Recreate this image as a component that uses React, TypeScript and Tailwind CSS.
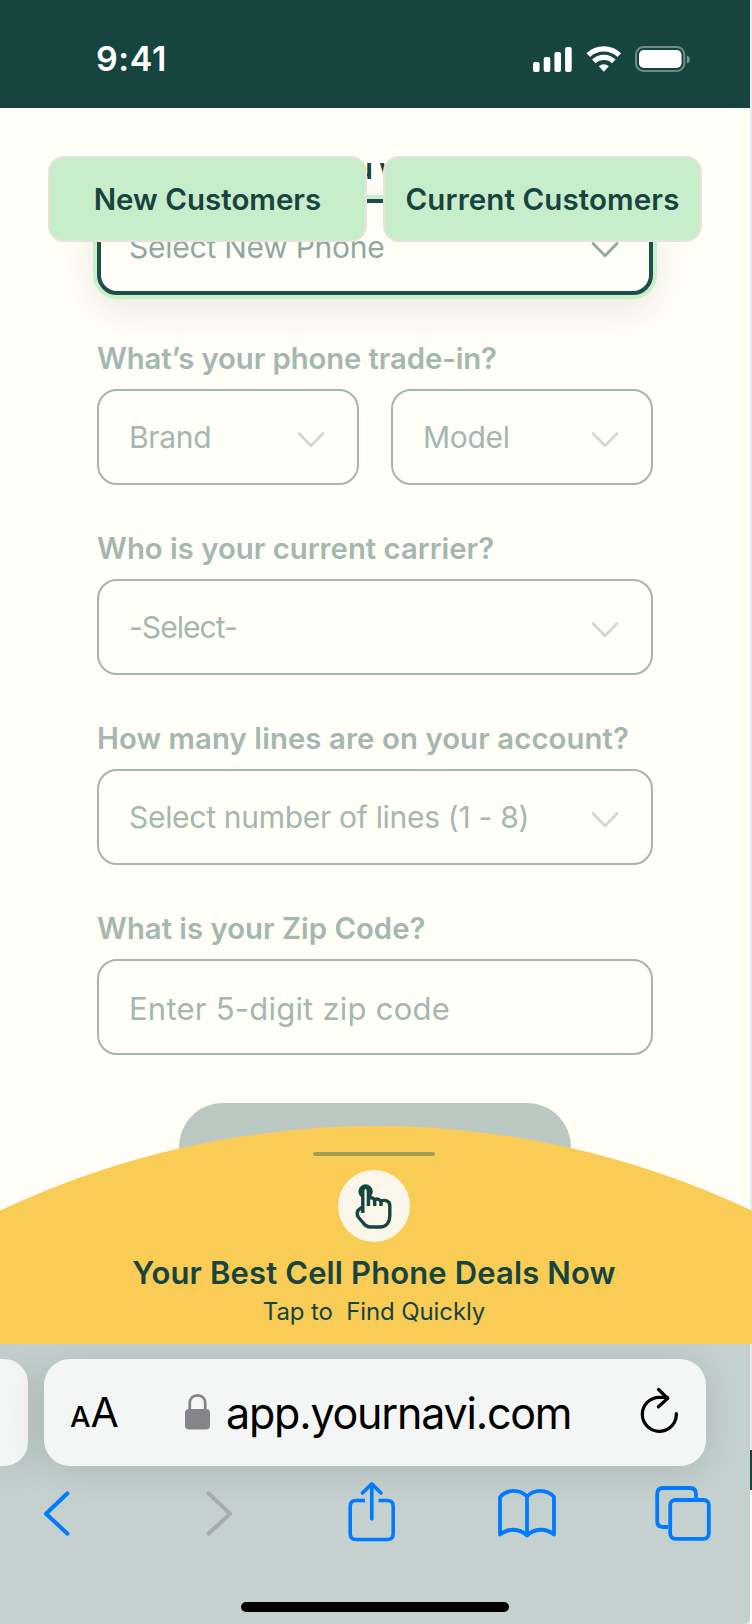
import React from 'react'

const ink = '#16443e';

function Chevron({ className }: { className: string }) {
  return (
    <svg className={className} width="28" height="18" viewBox="0 0 28 18" fill="none" stroke="currentColor" strokeWidth="2.8" strokeLinecap="round" strokeLinejoin="round">
      <path d="M2 2.5L14 14.7L26 2.5" />
    </svg>
  );
}

function Label({ children, className = 'text-[#a4b7b0]' }: { children: React.ReactNode; className?: string }) {
  return <div className={`h-[40px] whitespace-nowrap text-[29.3px] font-semibold leading-[40px] ${className}`}>{children}</div>;
}

function SelectBox({ text, textClass = 'tracking-[-0.3px]' }: { text: string; textClass?: string }) {
  return (
    <div className="flex h-24 flex-1 items-center justify-between rounded-[20px] border-2 border-[#a3b6b0] pl-[30px] pr-8 text-[#a4b7b0]">
      <span className={`whitespace-nowrap text-[30px] leading-[40px] ${textClass}`}>{text}</span>
      <Chevron className="mt-[5px] text-[#d0dad3]" />
    </div>
  );
}

function StatusBar() {
  return (
    <header className="flex h-[108px] w-[750px] items-center justify-between bg-[#16443e] pl-24 pr-[60px] pt-[10px] text-white">
      <span className="text-[34px] font-semibold leading-[40px] tracking-[0.6px]">9:41</span>
      <svg width="157" height="28" viewBox="533 45 157 28" fill="#fff">
        <rect x="533" y="62" width="6.6" height="10" rx="2" />
        <rect x="543.7" y="57" width="6.6" height="15" rx="2" />
        <rect x="554.4" y="52" width="6.6" height="20" rx="2" />
        <rect x="565.1" y="47" width="6.6" height="25" rx="2" />
        <g fill="none" stroke="#fff" strokeWidth="5.2">
          <path d="M588.3 55.2A22.4 22.4 0 0 1 619.3 55.2" />
          <path d="M593.8 61.4A14.6 14.6 0 0 1 613.8 61.4" />
        </g>
        <path d="M598.8 66.2A7.4 7.4 0 0 1 608.8 66.2L603.8 71.8Z" />
        <rect x="636" y="47" width="48.3" height="24" rx="7.5" fill="none" stroke="#fff" strokeOpacity="0.38" strokeWidth="2" />
        <rect x="639" y="50" width="42.5" height="18" rx="4.8" />
        <path d="M686.8 55.5C688.8 56.2 690 57.8 690 59.5C690 61.3 688.8 62.8 686.8 63.6Z" fillOpacity="0.42" />
      </svg>
    </header>
  );
}

function Form() {
  return (
    <div className="flex flex-col gap-[46px] px-[97px] pt-[41px]">
      <div className="flex flex-col gap-[10px]">
        <Label className="text-[#16443e] tracking-[0.35px] [word-spacing:-1.6px]">What phone do you want?</Label>
        <div className="flex h-24 items-center justify-between rounded-[20px] border-4 border-[#1b4f49] bg-[#fffff8] pl-7 pr-[30px] text-[#8fa8a2] shadow-[0_0_0_4px_#c8eeca,0_12px_40px_rgba(40,40,30,0.12)]">
          <span className="whitespace-nowrap text-[30px] leading-[40px] tracking-[-0.25px]">Select New Phone</span>
          <Chevron className="mt-[5px] text-[#8fa8a2]" />
        </div>
      </div>
      <div className="-mt-[2px] flex flex-col gap-[10px]">
        <Label className="tracking-[-0.1px] text-[#a4b7b0]">What’s your phone trade-in?</Label>
        <div className="flex gap-8">
          <SelectBox text="Brand" />
          <SelectBox text="Model" />
        </div>
      </div>
      <div className="-mt-[2px] flex flex-col gap-[10px]">
        <Label>Who is your current carrier?</Label>
        <div className="flex"><SelectBox text="-Select-" textClass="tracking-[-0.95px]" /></div>
      </div>
      <div className="-mt-[2px] flex flex-col gap-[10px]">
        <Label className="tracking-[0.1px] text-[#a4b7b0]">How many lines are on your account?</Label>
        <div className="flex"><SelectBox text="Select number of lines (1 - 8)" /></div>
      </div>
      <div className="-mt-[2px] flex flex-col gap-[10px]">
        <Label>What is your Zip Code?</Label>
        <div className="flex h-24 items-center rounded-[20px] border-2 border-[#a3b6b0] pl-[30px] pt-[3px] text-[31px] leading-[40px] tracking-[0.23px] text-[#a4b7b0]">
          Enter 5-digit zip code
        </div>
      </div>
      <div className="mt-[2px] h-[88px] w-[392px] self-center rounded-full bg-[#bbc8c2]" />
    </div>
  );
}

function DealsBanner() {
  return (
    <div className="absolute bottom-0 left-0 h-[218px] w-[752px]">
      <svg className="absolute inset-0" width="752" height="218" viewBox="0 0 752 218">
        <path d="M0 84.6A878 878 0 0 1 752 84.6V218H0Z" fill="#f9cc55" />
      </svg>
      <div className="relative flex w-[748px] flex-col items-center pt-[26px] text-[#16443e]">
        <div className="h-1 w-[122px] rounded-full bg-[#a39c57]" />
        <div className="mt-[14px] flex size-[72px] items-center justify-center rounded-full bg-[#faf7ea]">
          <svg width="40" height="48" viewBox="354.6 1182 40 48" fill="none" stroke={ink} strokeWidth="3.4" strokeLinejoin="round">
            <path d="M362.2 1194.4A4.9 4.9 0 1 1 370.2 1194.4" strokeWidth="4.6" strokeLinecap="round" />
            <path d="M363.4 1213V1190.5Q363.4 1187.3 366.2 1187.3Q369 1187.3 369 1190.5V1206M369 1198.5C371.5 1197 374.5 1197.8 375.3 1200.5V1206M375.3 1199.6C378 1198.4 380.8 1199.2 381.6 1202V1206M381.6 1201C386 1199.5 390.4 1201 390.4 1205.5V1215C390.4 1222.5 386.5 1227 380.5 1227H371.5C368 1227 365.5 1225.5 363.5 1222.5L359.2 1217.5C356.8 1214.3 357.5 1210.8 360 1209.2L363.4 1206.8" />
          </svg>
        </div>
        <div className="mt-[11px] whitespace-nowrap text-[31px] font-semibold leading-[40px] tracking-[0.13px]">Your Best Cell Phone Deals Now</div>
        <div className="mt-[3px] whitespace-pre text-[24px] leading-[32px] tracking-[-0.1px]">Tap to  Find Quickly</div>
      </div>
    </div>
  );
}

function BrowserBar() {
  return (
    <footer className="flex h-[280px] w-[750px] flex-col overflow-hidden rounded-br-md bg-[#c5d1cf]">
      <div className="flex gap-4 pt-[15px]">
        <div className="h-[107px] w-7 rounded-r-[24px] bg-[#f4f6f5] shadow-[0_4px_36px_rgba(50,70,60,0.18)]" />
        <div className="flex h-[107px] w-[662px] items-center rounded-[26px] bg-[#f4f6f5] pl-[26px] pr-7 text-black shadow-[0_4px_36px_rgba(50,70,60,0.18)]">
          <div className="flex w-[115px] items-baseline pt-1 leading-[44px]">
            <span className="text-[29px] font-medium">A</span>
            <span className="text-[41px]">A</span>
          </div>
          <svg width="25" height="36" viewBox="0 0 25 36" className="-mt-[2px] shrink-0">
            <path d="M4.8 16V9.5C4.8 4.5 8 1.4 12.5 1.4S20.2 4.5 20.2 9.5V16" fill="none" stroke="#858589" strokeWidth="2.8" />
            <rect y="15" width="25" height="20.6" rx="4" fill="#858589" />
          </svg>
          <span className="ml-4 whitespace-nowrap text-[43px] leading-[52px] tracking-[-1.2px]">app.yournavi.com</span>
          <svg className="-mt-[5px] ml-auto" width="38" height="46" viewBox="640 1387 38 46" fill="none" stroke="#000" strokeWidth="3.2" strokeLinecap="round" strokeLinejoin="round">
            <path d="M676.3 1413.5A17 17 0 1 1 659.3 1397.3H667.5M658.5 1389.5L667.8 1398.3L658.5 1406.8" />
          </svg>
        </div>
      </div>
      <svg width="750" height="64" viewBox="0 1480 750 64" className="mt-[14px]" fill="none" stroke="#007aff" strokeWidth="4" strokeLinecap="round" strokeLinejoin="round">
        <path d="M67.5 1493.3L46 1513.7L67.5 1533.7" />
        <path d="M208.5 1493.3L230 1513.7L208.5 1533.7" stroke="#a6acac" />
        <path d="M365 1500.5H356Q350.2 1500.5 350.2 1506.5V1533.5Q350.2 1539.5 356 1539.5H387.5Q393.2 1539.5 393.2 1533.5V1506.5Q393.2 1500.5 387.5 1500.5H378.5" strokeWidth="3.6" strokeLinecap="butt" />
        <path d="M371.8 1519V1484.5M362.5 1493L371.8 1483.8L381 1493" strokeWidth="3.6" />
        <path d="M527 1535.5C519.5 1528 508 1528 500 1534.5V1497C507.5 1489 519.5 1489 527 1496.5C534.5 1489 546.5 1489 554 1497V1534.5C546 1528 534.5 1528 527 1535.5ZM527 1496.5V1535" strokeWidth="3.8" />
        <path d="M668 1527H663Q657.2 1527 657.2 1521V1494Q657.2 1488 663 1488H690Q696 1488 696 1494V1499.5" strokeWidth="3.8" strokeLinecap="butt" />
        <rect x="670.2" y="1500" width="38.6" height="38.8" rx="5" strokeWidth="3.8" />
      </svg>
      <div className="mb-3 mt-auto h-[10px] w-[268px] self-center rounded-full bg-black" />
    </footer>
  );
}

export default function App() {
  return (
    <div className="flex h-[1624px] w-[752px] flex-col overflow-hidden bg-[#e9eaf1] font-['Inter','Liberation_Sans',sans-serif]">
      <StatusBar />
      <main className="relative h-[1236px] w-[752px] overflow-hidden">
        <div className="h-full w-[750px] overflow-hidden bg-[#fffff8]">
          <Form />
        </div>
        {/* sticky tabs float over the form */}
        <div className="absolute left-12 top-12 flex gap-4 text-[29.5px] font-semibold text-[#16443e]">
          <div className="flex h-[86px] w-[319px] items-center justify-center whitespace-nowrap rounded-2xl border-2 border-[#e7e3d6] bg-[#c8edca]">New Customers</div>
          <div className="flex h-[86px] w-[319px] items-center justify-center whitespace-nowrap rounded-2xl border-2 border-[#e7e3d6] bg-[#c8edca] tracking-[0.1px]">Current Customers</div>
        </div>
        <DealsBanner />
      </main>
      <div className="flex">
        <BrowserBar />
        <div className="flex w-[2px] flex-col pt-[106px]">
          <div className="h-10 bg-[#16443e]" />
          <div className="flex-1 bg-[#fffff8]" />
        </div>
      </div>
    </div>
  );
}
